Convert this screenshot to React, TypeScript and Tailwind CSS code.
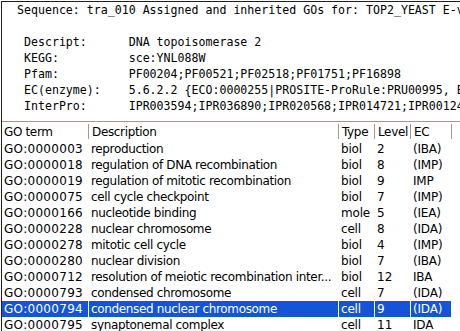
import clsx from 'clsx';

type Row = {
  term: string;
  desc: string;
  type: string;
  level: string;
  ec: string;
  selected?: boolean;
};

const rows: Row[] = [
  { term: 'GO:0000003', desc: 'reproduction', type: 'biol', level: '2', ec: '(IBA)' },
  { term: 'GO:0000018', desc: 'regulation of DNA recombination', type: 'biol', level: '8', ec: '(IMP)' },
  { term: 'GO:0000019', desc: 'regulation of mitotic recombination', type: 'biol', level: '9', ec: 'IMP' },
  { term: 'GO:0000075', desc: 'cell cycle checkpoint', type: 'biol', level: '7', ec: '(IMP)' },
  { term: 'GO:0000166', desc: 'nucleotide binding', type: 'mole', level: '5', ec: '(IEA)' },
  { term: 'GO:0000228', desc: 'nuclear chromosome', type: 'cell', level: '8', ec: '(IDA)' },
  { term: 'GO:0000278', desc: 'mitotic cell cycle', type: 'biol', level: '4', ec: '(IMP)' },
  { term: 'GO:0000280', desc: 'nuclear division', type: 'biol', level: '7', ec: '(IBA)' },
  { term: 'GO:0000712', desc: 'resolution of meiotic recombination inter...', type: 'biol', level: '12', ec: 'IBA' },
  { term: 'GO:0000793', desc: 'condensed chromosome', type: 'cell', level: '7', ec: '(IDA)' },
  { term: 'GO:0000794', desc: 'condensed nuclear chromosome', type: 'cell', level: '9', ec: '(IDA)', selected: true },
  { term: 'GO:0000795', desc: 'synaptonemal complex', type: 'cell', level: '11', ec: 'IDA' },
];

const infoLines = [
  'Sequence: tra_010 Assigned and inherited GOs for: TOP2_YEAST E-value 0.0',
  '',
  ' Descript:      DNA topoisomerase 2',
  ' KEGG:          sce:YNL088W',
  ' Pfam:          PF00204;PF00521;PF02518;PF01751;PF16898',
  ' EC(enzyme):    5.6.2.2 {ECO:0000255|PROSITE-ProRule:PRU00995, ECO:0000269}',
  ' InterPro:      IPR003594;IPR036890;IPR020568;IPR014721;IPR001241;IPR013760',
];

const columns = [
  { label: 'GO term', width: 'w-[87px]' },
  { label: 'Description', width: 'w-[250px]' },
  { label: 'Type', width: 'w-[36px]' },
  { label: 'Level', width: 'w-[36px]' },
  { label: 'EC', width: 'w-[41px]' },
];

const Cell = ({
  width,
  text,
  selected,
  className,
}: {
  width: string;
  text: string;
  selected?: boolean;
  className?: string;
}) => (
  <div className={clsx('h-full shrink-0 pr-[1px]', width)}>
    <div
      className={clsx(
        'h-full pl-[2px] flex items-center overflow-hidden whitespace-nowrap',
        selected ? 'bg-[#1454d6] text-white' : 'text-black',
        className,
      )}>
      {text}
    </div>
  </div>
);

export default function App() {
  return (
    <div className="w-[460px] h-[331px] overflow-hidden bg-white">
      <div className="ml-[1px] mt-[1px] h-[340px] border-l border-t border-[#1e1e1e]">
        <div className="h-[119px] overflow-hidden pl-[15px]">
          <pre className="font-['DejaVu_Sans_Mono',monospace] text-[11.6px] leading-[16px] text-black whitespace-pre">
            {infoLines.join('\n')}
          </pre>
        </div>

        <div className="border-t border-[#6fa3e0] font-['DejaVu_Sans',sans-serif] text-[12px]">
          <div className="flex h-[19px] items-center">
            {columns.map((col, i) => (
              <div key={col.label} className={clsx('flex h-full shrink-0 items-center', col.width)}>
                <span
                  className={clsx(
                    'flex-1 whitespace-nowrap overflow-hidden tracking-[-0.35px]',
                    i === 0 ? 'pl-[2px]' : 'pl-[3px]',
                  )}>
                  {col.label}
                </span>
                <span className="h-[15px] w-px shrink-0 bg-[#9b9b9b]" />
              </div>
            ))}
          </div>

          {rows.map((row) => (
            <div key={row.term} className="flex h-[16px]">
              <Cell width="w-[87px]" text={row.term} selected={row.selected} className="tracking-[0.3px]" />
              <Cell width="w-[250px]" text={row.desc} selected={row.selected} className="tracking-[-0.35px]" />
              <Cell width="w-[36px]" text={row.type} selected={row.selected} className="tracking-[-0.2px]" />
              <Cell width="w-[36px]" text={row.level} selected={row.selected} />
              <Cell width="w-[41px]" text={row.ec} selected={row.selected} className="tracking-[-0.2px]" />
            </div>
          ))}
        </div>
      </div>
    </div>
  );
}
